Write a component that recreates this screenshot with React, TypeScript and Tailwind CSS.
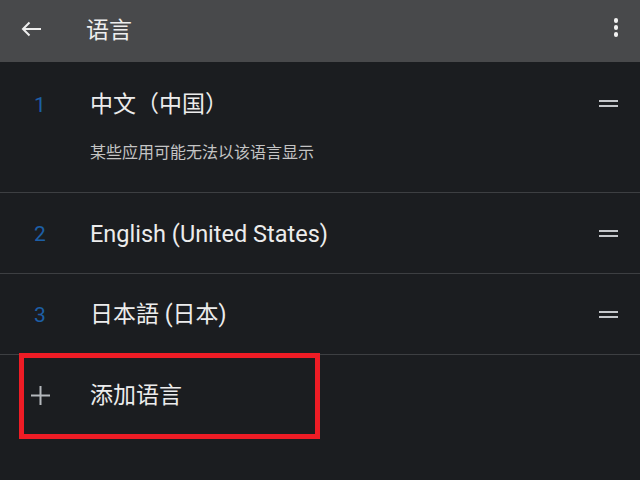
const FONT = 'font-[Roboto,"Noto_Sans_CJK_SC",sans-serif]';

function DragHandle() {
  return (
    <div className="flex w-[19px] flex-col gap-[3px]">
      <div className="h-[2px] bg-[#c3c6ca]" />
      <div className="h-[2px] bg-[#c3c6ca]" />
    </div>
  );
}

function LangRow({ num, label, note, latin }: { num: number; label: string; note?: string; latin?: boolean }) {
  return (
    <div className={note ? 'flex h-[130px] items-start pt-[29px]' : 'flex h-[80px] items-center pt-[2px]'}>
      <div className="w-[90px] pl-[34px] text-[21px] leading-[28px] text-[#1d5fa6]">{num}</div>
      <div className="flex-1">
        <div className={latin ? 'text-[23.5px] leading-[28px] text-[#ececec]' : 'text-[23px] leading-[28px] text-[#ececec]'}>
          {label}
        </div>
        {note && <div className="mt-[23px] text-[16px] leading-[22px] text-[#c4c4c4]">{note}</div>}
      </div>
      <div className={note ? 'pr-[22px] pt-[9px]' : 'pb-[2px] pr-[22px]'}>
        <DragHandle />
      </div>
    </div>
  );
}

export default function App() {
  return (
    <div className={`relative h-[480px] w-[640px] overflow-hidden bg-[#1b1d20] ${FONT}`}>
      <div className="flex h-[62px] items-center bg-[#48494b]">
        <svg viewBox="0 0 24 24" className="mb-[4px] ml-[20px] h-[24px] w-[24px]" fill="none" stroke="#eeeeee" strokeWidth={2}>
          <path d="M3 12h18M9.5 5.5 3 12l6.5 6.5" />
        </svg>
        <span className="ml-[42px] text-[23px] leading-[28px] text-[#eeeeee]">语言</span>
        <div className="mb-[7px] ml-auto mr-[22px] flex flex-col items-center gap-[2.5px]">
          <div className="h-[4.5px] w-[4.5px] rounded-full bg-[#f2f2f2]" />
          <div className="h-[4.5px] w-[4.5px] rounded-full bg-[#f2f2f2]" />
          <div className="h-[4.5px] w-[4.5px] rounded-full bg-[#f2f2f2]" />
        </div>
      </div>

      <LangRow num={1} label="中文（中国）" note="某些应用可能无法以该语言显示" />
      <div className="h-px bg-[#3d3f42]" />
      <LangRow num={2} label="English (United States)" latin />
      <div className="h-px bg-[#3d3f42]" />
      <LangRow num={3} label="日本語 (日本)" />
      <div className="h-px bg-[#3d3f42]" />

      <div className="flex h-[80px] items-center pt-[2px]">
        <div className="w-[90px] pb-[2px] pl-[31px]">
          <svg viewBox="0 0 19 19" className="h-[19px] w-[19px]" stroke="#b4b8bc" strokeWidth={2}>
            <path d="M9.5 0v19M0 9.5h19" />
          </svg>
        </div>
        <span className="text-[23px] leading-[28px] text-[#ececec]">添加语言</span>
      </div>

      <div className="absolute left-[19px] top-[353px] h-[86px] w-[301px] border-[5px] border-[#ee1c25]" />
    </div>
  );
}
